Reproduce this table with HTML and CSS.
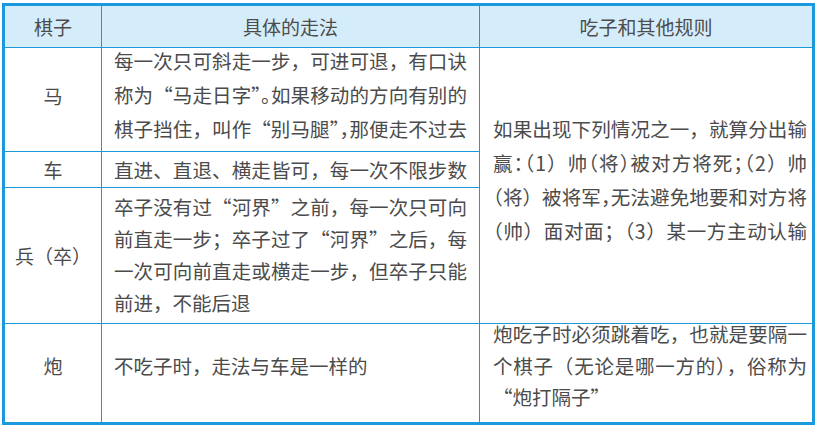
FILE: index.html
```html
<!DOCTYPE html>
<html lang="zh-CN">
<head>
<meta charset="utf-8">
<title>象棋走法</title>
<link rel="stylesheet" href="styles.css">
</head>
<body>
<div class="page">
<table class="rules">
  <colgroup>
    <col class="c-piece">
    <col class="c-move">
    <col class="c-rule">
  </colgroup>
  <thead>
    <tr class="r-head">
      <th>棋子</th>
      <th>具体的走法</th>
      <th>吃子和其他规则</th>
    </tr>
  </thead>
  <tbody>
    <tr class="r-ma">
      <td class="piece top p-ma">马</td>
      <td class="move top">
        <div class="txt t-ma">
          <span class="ln">每一次只可斜走一步，可进可退，有口诀</span>
          <span class="ln">称为“马走日字”<span class="h">。</span>如果移动的方向有别的</span>
          <span class="ln">棋子挡住，叫作“别马腿”<span class="h">，</span>那便走不过去</span>
        </div>
      </td>
      <td class="rule top t-span" rowspan="3">
        <div class="txt">
          <span class="ln">如果出现下列情况之一，就算分出输</span>
          <span class="ln">赢<span class="h">：</span>（1）帅<span class="h">（</span>将<span class="h">）</span>被对方将死<span class="h">；</span>（2）帅</span>
          <span class="ln"><span class="h">（</span>将）被将军<span class="h">，</span>无法避免地要和对方将</span>
          <span class="ln"><span class="h">（</span>帅）面对面；（3）某一方主动认输</span>
        </div>
      </td>
    </tr>
    <tr class="r-che">
      <td class="piece">车</td>
      <td class="move"><span class="ln">直进、直退、横走皆可，每一次不限步数</span></td>
    </tr>
    <tr class="r-bing">
      <td class="piece">兵（卒）</td>
      <td class="move top t-bing">
        <div class="txt">
          <span class="ln">卒子没有过“河界”之前，每一次只可向</span>
          <span class="ln">前直走一步；卒子过了“河界”之后，每</span>
          <span class="ln">一次可向前直走或横走一步，但卒子只能</span>
          <span class="ln last">前进，不能后退</span>
        </div>
      </td>
    </tr>
    <tr class="r-pao">
      <td class="piece top p-pao">炮</td>
      <td class="move top p-pao"><span class="ln last">不吃子时，走法与车是一样的</span></td>
      <td class="rule top">
        <div class="txt t-pao">
          <span class="ln">炮吃子时必须跳着吃，也就是要隔一</span>
          <span class="ln">个棋子（无论是哪一方的），俗称为</span>
          <span class="ln last">“炮打隔子”</span>
        </div>
      </td>
    </tr>
  </tbody>
</table>
</div>
</body>
</html>
```

FILE: styles.css
```css
html, body {
  margin: 0;
  padding: 0;
  background: #ffffff;
}

.page {
  padding: 3px 0 0 2px;
}

.rules {
  border-collapse: collapse;
  width: 813px;
  table-layout: fixed;
  border: 3px solid #1c98dc;
  font-family: "Noto Sans CJK SC", "Noto Sans", sans-serif;
  color: #4b4b4b;
}

.c-piece { width: 98px; }
.c-move { width: 378px; }
.c-rule { width: auto; }

.rules th,
.rules td {
  border: 1px solid #1c98dc;
  padding: 0;
}

.rules th {
  background: #d5ecfa;
  font-weight: normal;
  font-size: 19px;
  color: #4d4d4d;
  text-align: center;
  vertical-align: middle;
}

.r-head { height: 43px; }
.r-ma { height: 104px; }
.r-che { height: 36px; }
.r-bing { height: 136px; }
.r-pao { height: 100px; }

.rules .piece {
  text-align: center;
  vertical-align: middle;
  font-size: 19px;
  line-height: 34px;
}

.rules .move,
.rules .rule {
  font-size: 19.5px;
  line-height: 34px;
  text-align: left;
  vertical-align: middle;
}

.rules .move { padding-left: 12px; }
.rules .rule { padding-left: 13px; }

.rules .top { vertical-align: top; }

/* vertical placement per row */
.rules .p-ma { padding-top: 31px; }
.rules .p-pao { padding-top: 25px; }
.rules .t-span { padding-top: 64px; }
.rules .t-bing { padding-top: 3px; line-height: 32px; }
.t-ma { margin-top: -4px; }
.t-pao { margin-top: -6px; line-height: 31.5px; }

.ln {
  display: block;
  text-align: justify;
  text-align-last: justify;
  white-space: nowrap;
}

.move .ln { width: 353px; }
.rule .ln { width: 314px; }

.h { font-feature-settings: "halt" 1; }

.ln.last { text-align-last: left; }
```
